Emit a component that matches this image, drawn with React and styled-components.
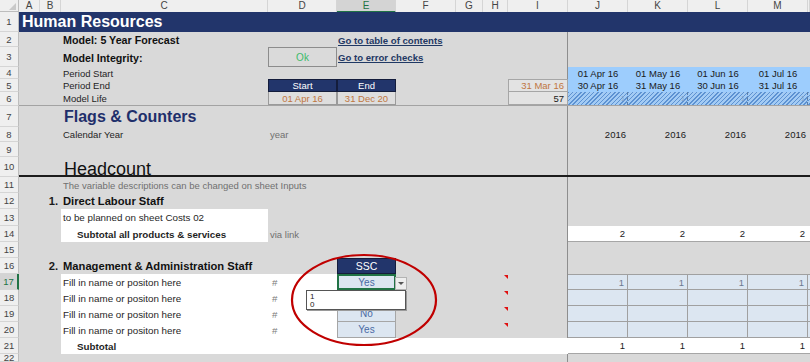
import React from 'react';
import styled, { createGlobalStyle, css } from 'styled-components';

const NAVY = '#22356b';
const GREEN = '#217346';
// A..M plus a sliver of N; the row-number column sits outside this grid
const GRID = '21px 21px 207px 69px 59px 60px 27px 25px 60px 60px 60px 60px 60px minmax(0, 1fr)';

const GlobalStyle = createGlobalStyle`
  html, body {
    margin: 0;
    padding: 0;
    background: #d9d9d9;
  }
  body {
    font-family: "Liberation Sans", Arial, sans-serif;
    color: #1a1a1a;
    overflow: hidden;
  }
`;

const Sheet = styled.div`
  position: relative;
  width: 810px;
  height: 362px;
  overflow: hidden;
  background: #d9d9d9;
`;

/* ---------- column letters ---------- */

const ColHeader = styled.div`
  display: flex;
  height: 12px;
`;

const Corner = styled.div`
  position: relative;
  width: 19px;
  flex: none;
  box-sizing: border-box;
  background: #efefef;
  border-right: 1px solid #bdbdbd;
  border-bottom: 1px solid #bdbdbd;

  &::after {
    content: '';
    position: absolute;
    right: 2px;
    bottom: 1px;
    border-left: 7px solid transparent;
    border-bottom: 7px solid #c9c9c9;
  }
`;

const Letters = styled.div`
  flex: 1;
  display: grid;
  grid-template-columns: ${GRID};
`;

const Letter = styled.div`
  box-sizing: border-box;
  background: ${p => (p.$active ? '#d4d4d4' : '#efefef')};
  color: ${p => (p.$active ? GREEN : '#444')};
  border-right: 1px solid #d5d5d5;
  border-bottom: ${p => (p.$active ? `2px solid ${GREEN}` : '1px solid #bdbdbd')};
  font-size: 10px;
  line-height: 11px;
  text-align: center;
`;

/* ---------- rows ---------- */

const Row = styled.div`
  display: flex;
  height: ${p => p.$h}px;
`;

const RowNum = styled.div`
  width: 19px;
  flex: none;
  box-sizing: border-box;
  display: flex;
  align-items: center;
  justify-content: center;
  background: ${p => (p.$active ? '#d4d4d4' : '#efefef')};
  color: ${p => (p.$active ? GREEN : '#444')};
  border-right: ${p => (p.$active ? `2px solid ${GREEN}` : '1px solid #bdbdbd')};
  border-bottom: 1px solid #d5d5d5;
  font-size: 9.5px;
`;

const Body = styled.div`
  flex: 1;
  box-sizing: border-box;
  display: grid;
  grid-template-columns: ${GRID};
  background:
    linear-gradient(to right, transparent 548px, #8e8e8e 548px, #8e8e8e 549px, transparent 549px),
    #d9d9d9;
  border-bottom: ${p => p.$rule || 'none'};
`;

const Line = ({ n, h, active, rule, children }) => (
  <Row $h={h}>
    <RowNum $active={active}>{n}</RowNum>
    <Body $rule={rule}>{children}</Body>
  </Row>
);

/* ---------- cells ---------- */

const Cell = styled.div`
  grid-column: ${p => p.$col};
  position: relative;
  box-sizing: border-box;
  display: flex;
  align-items: center;
  min-width: 0;
  white-space: nowrap;
  font-size: 9.5px;
`;

const Banner = styled(Cell)`
  background: ${NAVY};
  color: #fff;
  font-weight: bold;
  font-size: 16px;
  padding-left: 3px;
`;

const Strong = styled(Cell)`
  font-weight: bold;
  font-size: 10.7px;
  color: #111;
  padding-left: 2px;
  padding-top: 1px;
`;

const GoTo = styled(Cell)`
  font-weight: bold;
  font-size: 9.6px;
  color: #1f3864;
  padding-left: 1px;
  padding-top: 1px;

  span {
    text-decoration: underline;
    text-decoration-thickness: 1px;
    text-underline-offset: 1px;
  }
`;

const Status = styled(Cell)`
  justify-content: center;
  background: #dadada;
  border: 1px solid #8c8c8c;
  color: #3dba6a;
  font-size: 10px;
`;

const Plain = styled(Cell)`
  padding-left: 2px;
  color: #1f1f1f;
`;

const Muted = styled(Cell)`
  padding-left: 2px;
  color: #707070;
`;

const Band = styled(Cell)`
  justify-content: center;
  background: #9dcdfd;
  color: #1a1a1a;
`;

const Hatch = styled(Cell)`
  justify-content: flex-end;
  padding-right: 2px;
  font-size: 7px;
  color: #7f9fc6;
  background: repeating-linear-gradient(135deg, #5d92d2 0 1px, #a3cbf4 1px 3px);
  border-right: 1px dashed #5d7faa;
`;

const NavyCell = styled(Cell)`
  justify-content: center;
  background: ${NAVY};
  border: 1px solid #141d3c;
  color: #fff;
  font-size: ${p => (p.$big ? '10.5px' : '9.5px')};
`;

const DateBox = styled(Cell)`
  justify-content: center;
  background: #dedede;
  border: 1px solid #9a9a9a;
  border-top: none;
  color: #c0763f;
`;

const Boxed = styled(Cell)`
  justify-content: flex-end;
  padding-right: 3px;
  background: #e3e3e3;
  border: 1px solid #a6a6a6;
  border-top: ${p => (p.$first ? '1px solid #a6a6a6' : 'none')};
  color: ${p => p.$tone || '#1a1a1a'};
`;

const Heading = styled(Cell)`
  padding-left: 3px;
  color: #1f2f6b;
  font-weight: bold;
  font-size: 16px;
`;

const Big = styled(Cell)`
  padding-left: 3px;
  padding-top: 2px;
  font-size: 18px;
  color: #111;
`;

const Num = styled(Cell)`
  justify-content: flex-end;
  padding-right: 2px;
  color: #1a1a1a;
`;

const SecNum = styled(Cell)`
  justify-content: flex-end;
  padding-right: 3px;
  font-weight: bold;
  font-size: 11.2px;
`;

const SecTitle = styled(Cell)`
  padding-left: 2px;
  font-weight: bold;
  font-size: 11.2px;
  color: #111;
`;

const Paper = styled(Cell)`
  background: #fff;
  padding-left: ${p => p.$indent || 2}px;
  color: ${p => (p.$muted ? '#7a7a7a' : '#1f1f1f')};
  font-weight: ${p => (p.$bold ? 'bold' : 'normal')};
  font-size: ${p => (p.$bold ? '9.8px' : '9.8px')};
`;

const WhiteNum = styled(Cell)`
  justify-content: flex-end;
  padding-right: 3px;
  background: #fff;
  border-bottom: 1px solid #a6a6a6;
  color: #1a1a1a;
`;

const Entry = styled(Cell)`
  justify-content: center;
  background: #dce6f1;
  border: 1px solid #a6a6a6;
  border-top: none;
  color: #4a6aa5;
  font-size: 10px;

  ${p =>
    p.$selected &&
    css`
      border: 2px solid ${GREEN};
    `}
`;

const Flag = styled(Cell)`
  &::after {
    content: '';
    position: absolute;
    top: 1px;
    right: 0;
    border-left: 4px solid transparent;
    border-top: 4px solid #e01010;
  }
`;

const Tile = styled(Cell)`
  justify-content: flex-end;
  padding-right: 3px;
  background: #dce6f1;
  border-right: 1px solid #a0a0a0;
  border-bottom: 1px solid #a0a0a0;
  border-top: ${p => (p.$top ? '1px solid #a0a0a0' : 'none')};
  color: #6b7a90;
`;

/* ---------- overlays ---------- */

const DropButton = styled.div`
  position: absolute;
  left: 395px;
  top: 277px;
  width: 12px;
  height: 13px;
  box-sizing: border-box;
  background: #eeeeee;
  border: 1px solid #b3b3b3;
  display: flex;
  align-items: center;
  justify-content: center;

  &::after {
    content: '';
    border-left: 3px solid transparent;
    border-right: 3px solid transparent;
    border-top: 3px solid #555;
  }
`;

const Picker = styled.div`
  position: absolute;
  left: 306px;
  top: 290px;
  width: 100px;
  height: 20px;
  box-sizing: border-box;
  padding: 2px 0 0 3px;
  background: #fff;
  border: 1px solid #555;
  box-shadow: 1px 1px 0 #9a9a9a;
  font-size: 8px;
  line-height: 8px;
  color: #222;
`;

const Ring = styled.svg`
  position: absolute;
  left: 289px;
  top: 253px;
  width: 150px;
  height: 94px;
  pointer-events: none;
`;

const letters = ['A', 'B', 'C', 'D', 'E', 'F', 'G', 'H', 'I', 'J', 'K', 'L', 'M', ''];

const months = [
  { start: '01 Apr 16', end: '30 Apr 16' },
  { start: '01 May 16', end: '31 May 16' },
  { start: '01 Jun 16', end: '30 Jun 16' },
  { start: '01 Jul 16', end: '31 Jul 16' },
];

const staff = [
  { n: 17, ssc: 'Yes', value: '1' },
  { n: 18, ssc: 'Yes', value: '' },
  { n: 19, ssc: 'No', value: '' },
  { n: 20, ssc: 'Yes', value: '' },
];

const App = () => {
  return (
    <Sheet>
      <GlobalStyle />

      <ColHeader>
        <Corner />
        <Letters>
          {letters.map((l, i) => (
            <Letter key={i} $active={l === 'E'}>{l}</Letter>
          ))}
        </Letters>
      </ColHeader>

      <Line n={1} h={20}>
        <Banner $col="1 / -1">Human Resources</Banner>
      </Line>

      <Line n={2} h={15}>
        <Strong $col="3">Model: 5 Year Forecast</Strong>
        <GoTo $col="5 / span 4"><span>Go to table of contents</span></GoTo>
      </Line>

      <Line n={3} h={20}>
        <Strong $col="3">Model Integrity:</Strong>
        <Status $col="4">Ok</Status>
        <GoTo $col="5 / span 4"><span>Go to error checks</span></GoTo>
      </Line>

      <Line n={4} h={12}>
        <Plain $col="3">Period Start</Plain>
        {months.map((m, i) => (
          <Band key={m.start} $col={10 + i}>{m.start}</Band>
        ))}
        <Band $col="14" />
      </Line>

      <Line n={5} h={13}>
        <Plain $col="3">Period End</Plain>
        <NavyCell $col="4">Start</NavyCell>
        <NavyCell $col="5">End</NavyCell>
        <Boxed $col="9" $first $tone="#c0763f">31 Mar 16</Boxed>
        {months.map((m, i) => (
          <Band key={m.end} $col={10 + i}>{m.end}</Band>
        ))}
        <Band $col="14" />
      </Line>

      <Line n={6} h={14} rule="1px solid #a3a3a3">
        <Plain $col="3">Model Life</Plain>
        <DateBox $col="4">01 Apr 16</DateBox>
        <DateBox $col="5">31 Dec 20</DateBox>
        <Boxed $col="9">57</Boxed>
        {months.map((m, i) => (
          <Hatch key={m.start} $col={10 + i}>1</Hatch>
        ))}
        <Hatch $col="14" />
      </Line>

      <Line n={7} h={21}>
        <Heading $col="3">Flags &amp; Counters</Heading>
      </Line>

      <Line n={8} h={15}>
        <Plain $col="3">Calendar Year</Plain>
        <Muted $col="4">year</Muted>
        {months.map((m, i) => (
          <Num key={m.start} $col={10 + i}>2016</Num>
        ))}
      </Line>

      <Line n={9} h={15} />

      <Line n={10} h={20} rule="2px solid #1c1c1c">
        <Big $col="3">Headcount</Big>
      </Line>

      <Line n={11} h={16}>
        <Muted $col="3">The variable descriptions can be changed on sheet Inputs</Muted>
      </Line>

      <Line n={12} h={16}>
        <SecNum $col="2">1.</SecNum>
        <SecTitle $col="3">Direct Labour Staff</SecTitle>
      </Line>

      <Line n={13} h={17}>
        <Paper $col="3">to be planned on sheet Costs 02</Paper>
      </Line>

      <Line n={14} h={16}>
        <Paper $col="3" $indent={16} $bold>Subtotal all products &amp; services</Paper>
        <Muted $col="4">via link</Muted>
        {months.map((m, i) => (
          <WhiteNum key={m.start} $col={10 + i}>2</WhiteNum>
        ))}
        <WhiteNum $col="14" />
      </Line>

      <Line n={15} h={16} />

      <Line n={16} h={16}>
        <SecNum $col="2">2.</SecNum>
        <SecTitle $col="3">Management &amp; Administration Staff</SecTitle>
        <NavyCell $col="5" $big>SSC</NavyCell>
      </Line>

      {staff.map((s, r) => (
        <Line key={s.n} n={s.n} h={16} active={r === 0}>
          <Paper $col="3">Fill in name or positon here</Paper>
          <Paper $col="4" $muted $indent={4}>#</Paper>
          <Entry $col="5" $selected={r === 0}>{s.ssc}</Entry>
          <Flag $col="8" />
          {months.map((m, i) => (
            <Tile key={m.start} $col={10 + i} $top={r === 0}>{s.value}</Tile>
          ))}
          <Tile $col="14" $top={r === 0} />
        </Line>
      ))}

      <Line n={21} h={16}>
        <Paper $col="3" $indent={16} $bold>Subtotal</Paper>
        <Paper $col="4 / span 6" />
        {months.map((m, i) => (
          <WhiteNum key={m.start} $col={10 + i}>1</WhiteNum>
        ))}
        <WhiteNum $col="14" />
      </Line>

      <Line n={22} h={8} />

      <DropButton />
      <Picker>
        <div>1</div>
        <div>0</div>
      </Picker>

      <Ring viewBox="0 0 150 94">
        <ellipse cx="75" cy="47" rx="72" ry="45" fill="none" stroke="#c00000" strokeWidth="2.2" />
      </Ring>
    </Sheet>
  );
};

export default App;
